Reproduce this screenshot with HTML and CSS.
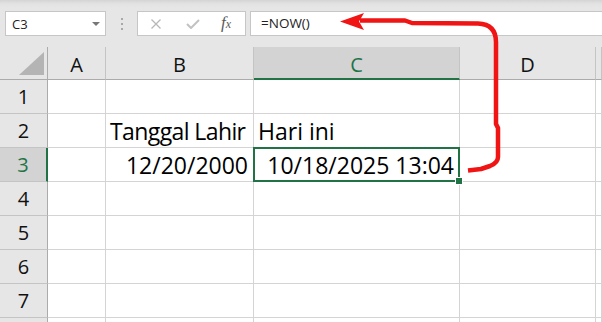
FILE: index.html
```html
<!DOCTYPE html>
<html lang="id">
<head>
    <meta charset="UTF-8">
    <meta name="viewport" content="width=device-width, initial-scale=1.0">
    <title>Fungsi NOW di Excel</title>
    <link rel="stylesheet" href="styles.css">
</head>
<body>
    <div class="app">
        <div class="toolbar">
            <div class="namebox">
                <span>C3</span>
                <span class="caret"></span>
            </div>
            <div class="grip"><i></i><i></i><i></i></div>
            <div class="fx-buttons">
                <svg class="btn-cancel" width="12" height="10" viewBox="0 0 12 10">
                    <path d="M1.5 0.5 L10.5 9.5 M10.5 0.5 L1.5 9.5" stroke="#b8b8b8" stroke-width="1.3" fill="none"/>
                </svg>
                <svg class="btn-enter" width="14" height="10" viewBox="0 0 14 10">
                    <path d="M1 5 L5 9 L13 1" stroke="#c2c2c2" stroke-width="2" fill="none"/>
                </svg>
                <span class="btn-fx">f<small>x</small></span>
            </div>
            <div class="formula">=NOW()</div>
        </div>

        <div class="sheet">
            <!-- header -->
            <div class="corner"><span class="tri"></span></div>
            <div class="col-head">A</div>
            <div class="col-head">B</div>
            <div class="col-head active">C</div>
            <div class="col-head">D</div>
            <div class="col-head"></div>

            <!-- 1 -->
            <div class="row-head">1</div>
            <div class="cell"></div><div class="cell"></div><div class="cell"></div><div class="cell"></div><div class="cell"></div>

            <!-- 2 -->
            <div class="row-head">2</div>
            <div class="cell"></div>
            <div class="cell text label">Tanggal Lahir</div>
            <div class="cell text">Hari ini</div>
            <div class="cell"></div><div class="cell"></div>

            <!-- 3 -->
            <div class="row-head active">3</div>
            <div class="cell"></div>
            <div class="cell num">12/20/2000</div>
            <div class="cell num selected">10/18/2025 13:04<span class="sel-frame"></span><span class="fill-handle"></span></div>
            <div class="cell"></div><div class="cell"></div>

            <!-- 4 - 7 -->
            <div class="row-head">4</div>
            <div class="cell"></div><div class="cell"></div><div class="cell"></div><div class="cell"></div><div class="cell"></div>
            <div class="row-head">5</div>
            <div class="cell"></div><div class="cell"></div><div class="cell"></div><div class="cell"></div><div class="cell"></div>
            <div class="row-head">6</div>
            <div class="cell"></div><div class="cell"></div><div class="cell"></div><div class="cell"></div><div class="cell"></div>
            <div class="row-head">7</div>
            <div class="cell"></div><div class="cell"></div><div class="cell"></div><div class="cell"></div><div class="cell"></div>
            <!-- baris 8, terpotong di bawah -->
            <div class="row-head"></div>
            <div class="cell"></div><div class="cell"></div><div class="cell"></div><div class="cell"></div><div class="cell"></div>
        </div>

        <!-- panah merah dari sel ke formula bar -->
        <svg class="annot" width="602" height="322" viewBox="0 0 602 322">
            <path d="M360 20.5 L405 20.5 L412 23 L478 23.5 C490 24 496 30 496 42 L496 124 L498 128 L498 157 C498 162 495 164 490 166 L481 169 L468 170.5"
                  stroke="#f01414" stroke-width="4.5" fill="none" stroke-linejoin="round"/>
            <polygon points="340,21.5 364,13 359,21.5 364,30" fill="#f01414"/>
        </svg>
    </div>
</body>
</html>
```

FILE: styles.css
```css
body {
    margin: 0;
    background: #e6e6e6;
    overflow: hidden;
}
.app {
    position: relative;
    width: 602px;
    height: 322px;
    overflow: hidden;
    background: #e6e6e6;
}

/* formula bar */
.toolbar {
    height: 47px;
    box-sizing: border-box;
    padding: 11px 0 0 5px;
    display: flex;
    align-items: flex-start;
    background: linear-gradient(#d4d4d4 0px, #e3e3e3 4px, #e6e6e6 8px);
    font-family: "Open Sans", "Noto Sans", sans-serif;
    font-size: 13px;
    color: #222;
}
.namebox {
    width: 101px;
    height: 25px;
    box-sizing: border-box;
    border: 1px solid #c6c6c6;
    background: #fff;
    display: flex;
    align-items: center;
    justify-content: space-between;
    padding: 0 5px 0 6px;
}
.caret {
    width: 0;
    height: 0;
    border-left: 4px solid transparent;
    border-right: 4px solid transparent;
    border-top: 4px solid #777;
    margin-top: 1px;
}
.grip {
    width: 31px;
    height: 25px;
    display: flex;
    flex-direction: column;
    align-items: center;
    justify-content: center;
    gap: 3px;
}
.grip i {
    display: block;
    width: 2px;
    height: 2px;
    background: #a8a8a8;
}
.fx-buttons {
    width: 109px;
    height: 25px;
    box-sizing: border-box;
    border: 1px solid #c6c6c6;
    background: #fff;
    display: flex;
    align-items: center;
    padding-left: 12px;
}
.btn-cancel {
    margin-right: 24px;
}
.btn-enter {
    margin-right: 21px;
}
.btn-fx {
    font-family: "Liberation Serif", serif;
    font-style: italic;
    font-size: 17px;
    color: #5a5a5a;
    margin-top: -2px;
}
.btn-fx small {
    font-size: 12px;
}
.formula {
    flex: 1;
    height: 25px;
    box-sizing: border-box;
    margin-left: 4px;
    border: 1px solid #c6c6c6;
    border-right: none;
    background: #fff;
    padding-left: 10px;
    font-size: 13.5px;
    line-height: 23px;
}

/* grid */
.sheet {
    display: grid;
    grid-template-columns: 48px 58px 148px 206px 136px 1fr;
    grid-template-rows: 33px repeat(8, 34px);
    background: #fff;
}
.corner,
.col-head,
.row-head,
.cell {
    box-sizing: border-box;
    border-right: 1px solid #d4d4d4;
    border-bottom: 1px solid #d4d4d4;
    display: flex;
    align-items: center;
}
.corner {
    background: #e6e6e6;
    border-right-color: #ababab;
    border-bottom-color: #ababab;
    position: relative;
}
.tri {
    position: absolute;
    right: 3px;
    bottom: 4px;
    width: 0;
    height: 0;
    border-left: 25px solid transparent;
    border-bottom: 23px solid #b4b4b4;
}
.col-head {
    background: #e6e6e6;
    border-right-color: #c4c4c4;
    border-bottom-color: #ababab;
    justify-content: center;
    padding-top: 3px;
    font-family: "Open Sans", "Noto Sans", sans-serif;
    font-size: 20px;
    color: #111;
}
.col-head.active {
    background: #d3d3d3;
    color: #217346;
    border-bottom: 2px solid #217346;
    padding-top: 4px;
}
.row-head {
    background: #e6e6e6;
    border-right-color: #ababab;
    border-bottom-color: #c4c4c4;
    justify-content: center;
    font-family: "Open Sans", "Noto Sans", sans-serif;
    font-size: 20px;
    color: #111;
}
.row-head.active {
    background: #d3d3d3;
    color: #217346;
    border-right: 2px solid #217346;
}
.cell {
    font-family: "Open Sans", "Noto Sans", sans-serif;
    font-size: 23px;
    color: #000;
    white-space: nowrap;
}
.cell.text {
    padding-left: 4px;
}
.cell.label {
    letter-spacing: -0.6px;
}
.cell.num {
    justify-content: flex-end;
    padding-right: 5px;
}
.cell.selected {
    position: relative;
}
.sel-frame {
    position: absolute;
    left: -1px;
    top: -1px;
    right: -1px;
    bottom: -1px;
    border: 2px solid #217346;
}
.fill-handle {
    position: absolute;
    right: -4px;
    bottom: -4px;
    width: 6px;
    height: 6px;
    background: #217346;
    border: 1px solid #fff;
    box-sizing: content-box;
}

.annot {
    position: absolute;
    left: 0;
    top: 0;
    pointer-events: none;
}
```
